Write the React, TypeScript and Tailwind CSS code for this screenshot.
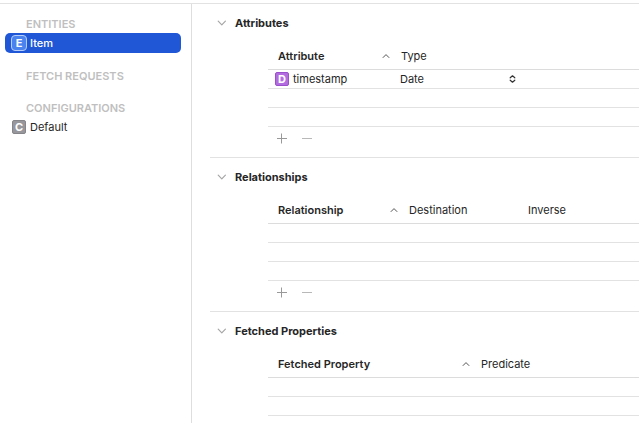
import type { ReactNode } from 'react';
import { useState } from 'react';

type Column = { label: string; width?: string };

function Badge({ letter, className }: { letter: string; className: string }) {
  return (
    <span
      aria-hidden="true"
      className={`flex shrink-0 items-center justify-center text-[11px] leading-none font-bold text-white ${className}`}
    >
      {letter}
    </span>
  );
}

function SidebarGroup({ title, children }: { title: string; children?: ReactNode }) {
  return (
    <section>
      <h2 className="h-[18px] pl-[21px] text-[11px] leading-[18px] font-semibold text-[#bfbfbf]">{title}</h2>
      {children}
    </section>
  );
}

function SortCaret() {
  return (
    <svg width="8" height="6" viewBox="0 0 8 6" fill="none" stroke="#555" strokeWidth="1" aria-hidden="true">
      <path d="M0.8 4.8 L4 1.6 L7.2 4.8" />
    </svg>
  );
}

function PropertySection({
  title,
  columns,
  children,
  blankRows,
}: {
  title: string;
  columns: Column[];
  children?: ReactNode;
  blankRows: number;
}) {
  const [open, setOpen] = useState(true);
  return (
    <section className="ml-[18px] border-b border-[#e2e2e2]">
      <h2>
        <button
          type="button"
          aria-expanded={open}
          onClick={() => setOpen(!open)}
          className="flex h-[38px] items-center gap-2 pl-[7px] text-[11px] leading-4 font-bold text-[#262626]"
        >
          <svg
            width="10"
            height="6"
            viewBox="0 0 10 6"
            fill="none"
            stroke="#a6a6a6"
            strokeWidth="1.2"
            strokeLinecap="round"
            strokeLinejoin="round"
            className={open ? '' : '-rotate-90'}
            aria-hidden="true"
          >
            <path d="M1.2 1.2 L4.8 4.8 L8.4 1.2" />
          </svg>
          {title}
        </button>
      </h2>
      {open && (
        <div className="pl-[58px]">
          <table className="w-full table-fixed border-separate border-spacing-0 text-left text-[11px] leading-4">
            <colgroup>
              {columns.map((c) => (
                <col key={c.label} className={c.width} />
              ))}
            </colgroup>
            <thead>
              <tr>
                {columns.map((c, i) => (
                  <th
                    key={c.label}
                    scope="col"
                    className={`h-7 border-b border-[#dcdcdc] p-0 text-[#262626] ${
                      i === 0 ? 'pr-1.5 pl-2.5 font-semibold' : 'pl-[5px] font-normal'
                    }`}
                  >
                    <span className="flex items-center justify-between">
                      {c.label}
                      {i === 0 && <SortCaret />}
                    </span>
                  </th>
                ))}
              </tr>
            </thead>
            <tbody>
              {children}
              {Array.from({ length: blankRows }, (_, r) => (
                <tr key={r}>
                  {columns.map((c) => (
                    <td key={c.label} className="h-[19px] border-b border-[#e2e2e2] p-0" />
                  ))}
                </tr>
              ))}
            </tbody>
          </table>
          <div className="flex h-[30px] items-start gap-[9px] pt-[3px] pl-[6px]">
            <button type="button" aria-label={`Add to ${title}`} className="flex size-4 items-center justify-center">
              <svg width="16" height="16" viewBox="0 0 16 16" stroke="#999" strokeWidth="1" aria-hidden="true">
                <path d="M3 8.5 H13 M7.5 3.5 V13.5" />
              </svg>
            </button>
            <button type="button" aria-label={`Remove from ${title}`} className="flex size-4 items-center justify-center">
              <svg width="16" height="16" viewBox="0 0 16 16" stroke="#b8b8b8" strokeWidth="1" aria-hidden="true">
                <path d="M3 8.5 H13" />
              </svg>
            </button>
          </div>
        </div>
      )}
    </section>
  );
}

export default function App() {
  return (
    <div className="h-screen overflow-hidden bg-white pt-[3px] font-['Inter','Liberation_Sans',sans-serif] text-[#262626]">
      <div className="flex h-full border-t border-[#e2e2e2]">
        <nav className="flex w-48 shrink-0 flex-col gap-3.5 border-r border-[#dedede] pt-[11px] pr-2.5 pl-[5px]">
          <SidebarGroup title="ENTITIES">
            <button
              type="button"
              aria-current="true"
              className="flex h-5 w-full items-center gap-[3px] rounded-[5px] bg-[#1f57d6] pl-1.5 text-[11px] leading-4 font-medium text-white"
            >
              <Badge letter="E" className="size-4 rounded-[4px] border border-[#b5cdfa] bg-[#4a82ee]" />
              Item
            </button>
          </SidebarGroup>
          <SidebarGroup title="FETCH REQUESTS" />
          <SidebarGroup title="CONFIGURATIONS">
            <button
              type="button"
              className="flex h-5 w-full items-center gap-1 rounded-[5px] pl-[7px] text-[11px] leading-4"
            >
              <Badge letter="C" className="size-3.5 rounded-[2px] border border-[#868589] bg-[#98979b]" />
              Default
            </button>
          </SidebarGroup>
        </nav>
        <main className="min-w-0 flex-1">
          <PropertySection
            title="Attributes"
            columns={[{ label: 'Attribute', width: 'w-32' }, { label: 'Type' }]}
            blankRows={2}
          >
            <tr>
              <td className="h-[19px] border-b border-[#e2e2e2] p-0 pl-[7px]">
                <span className="flex items-center gap-1">
                  <Badge letter="D" className="size-3.5 rounded-[2px] border border-[#9a4fcb] bg-[#b26cdf]" />
                  timestamp
                </span>
              </td>
              <td className="h-[19px] border-b border-[#e2e2e2] p-0">
                <div className="relative flex w-[122px] items-center">
                  <select
                    aria-label="Type of timestamp"
                    defaultValue="Date"
                    className="h-4 w-full appearance-none bg-transparent pl-1 text-[11px] leading-4"
                  >
                    <option>Date</option>
                    <option>String</option>
                    <option>Boolean</option>
                  </select>
                  <svg
                    width="7"
                    height="8"
                    viewBox="0 0 7 8"
                    fill="none"
                    stroke="#333"
                    strokeWidth="1.2"
                    strokeLinecap="round"
                    strokeLinejoin="round"
                    className="pointer-events-none absolute right-0.5"
                    aria-hidden="true"
                  >
                    <path d="M1.2 2.8 L3.5 0.8 L5.8 2.8 M1.2 5.2 L3.5 7.2 L5.8 5.2" />
                  </svg>
                </div>
              </td>
            </tr>
          </PropertySection>
          <PropertySection
            title="Relationships"
            columns={[
              { label: 'Relationship', width: 'w-[136px]' },
              { label: 'Destination', width: 'w-[119px]' },
              { label: 'Inverse' },
            ]}
            blankRows={3}
          />
          <PropertySection
            title="Fetched Properties"
            columns={[{ label: 'Fetched Property', width: 'w-52' }, { label: 'Predicate' }]}
            blankRows={3}
          />
        </main>
      </div>
    </div>
  );
}
